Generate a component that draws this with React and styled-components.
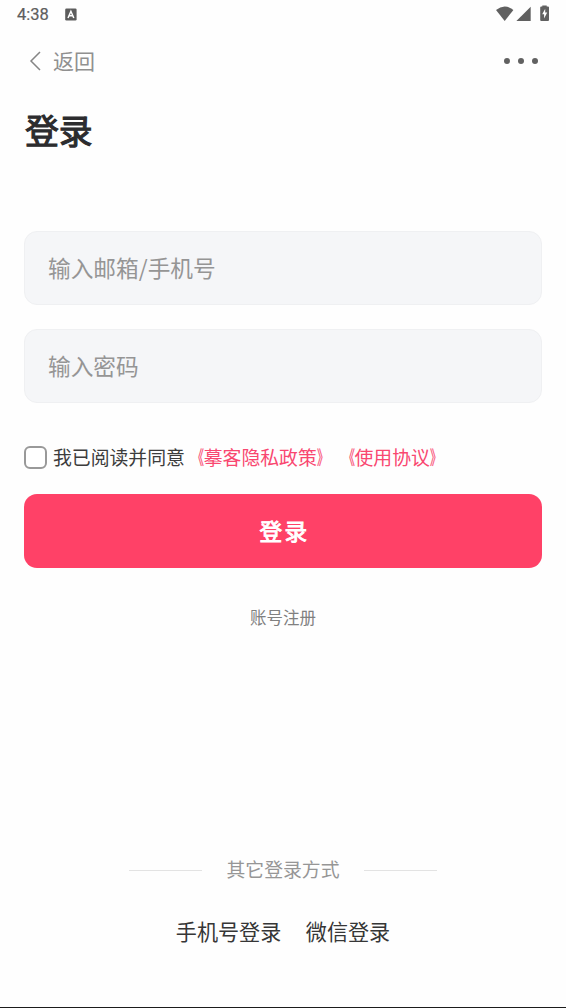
import React from 'react';
import styled, { createGlobalStyle } from 'styled-components';

const GlobalStyle = createGlobalStyle`
  * { box-sizing: border-box; }
  body { margin: 0; background: #fff; }
  button, input { font: inherit; }
`;

const Screen = styled.div`
  width: 100%;
  height: 1008px;
  display: flex;
  flex-direction: column;
  background: #fefefe;
  border-bottom: 1px solid #1c1c1c;
  font-family: 'Noto Sans CJK SC', sans-serif;
  text-spacing-trim: space-all;
  overflow: hidden;
`;

const StatusBar = styled.div`
  height: 28px;
  padding: 0 16px 0 17px;
  display: flex;
  align-items: center;
  justify-content: space-between;
  color: #5f5f5f;
`;

const StatusGroup = styled.div`
  display: flex;
  align-items: center;
  gap: ${(p) => p.$gap}px;
  svg { display: block; }
`;

const Clock = styled.span`
  font: 400 16.5px/20px Roboto, sans-serif;
  -webkit-text-stroke: 0.2px currentColor;
  padding-top: 2px;
`;

const NavBar = styled.header`
  height: 66px;
  padding: 0 28px;
  display: flex;
  align-items: center;
  justify-content: space-between;
`;

const BackButton = styled.button`
  display: flex;
  align-items: center;
  gap: 11px;
  padding: 0;
  border: 0;
  background: none;
  color: #909090;
  font-size: 21px;
  line-height: 30px;
`;

const BackLabel = styled.span`
  padding-bottom: 2px;
`;

const Dots = styled.div`
  display: flex;
  gap: 7.5px;
`;

const Dot = styled.span`
  width: 6.4px;
  height: 6.4px;
  border-radius: 50%;
  background: #616161;
`;

const Content = styled.main`
  flex: 1;
  display: flex;
  flex-direction: column;
  padding: 0 24px;
`;

const Title = styled.h1`
  margin: 12px 0 77px 1px;
  font-size: 33.8px;
  font-weight: 400;
  -webkit-text-stroke: 1.1px currentColor;
  line-height: 48px;
  color: #2c2c2e;
`;

const Field = styled.input`
  width: 100%;
  height: 74px;
  margin-bottom: 24px;
  padding: 0 23px 2px;
  border: 1px solid #eff0f2;
  border-radius: 13px;
  background: #f5f6f8;
  font-size: 22.7px;
  outline: none;
  &::placeholder { color: #959595; opacity: 1; }
`;

const Agreement = styled.label`
  height: 28px;
  margin: 16px 0 23px;
  display: flex;
  align-items: center;
  font-size: 18.85px;
  line-height: 28px;
  color: #3c3c3c;
  white-space: nowrap;
`;

const Checkbox = styled.input`
  appearance: none;
  width: 23px;
  height: 23px;
  margin: 0 6px 0 0;
  border: 2px solid #999;
  border-radius: 6px;
  background: #fff;
`;

const Policy = styled.span`
  color: #f94770;
`;

const Bracket = styled.span`
  display: inline-block;
  transform: scaleX(0.62);
  transform-origin: ${(p) => p.$side} center;
  -webkit-text-stroke: 0.25px currentColor;
`;

const SubmitButton = styled.button`
  height: 74px;
  padding: 0 0 2px 3px;
  border: 0;
  border-radius: 13px;
  background: #ff4167;
  color: #fff;
  font-size: 22.6px;
  font-weight: 400;
  -webkit-text-stroke: 0.9px currentColor;
  letter-spacing: 2.3px;
`;

const Register = styled.a`
  margin-top: 36px;
  align-self: center;
  font-size: 16.5px;
  line-height: 26px;
  color: #808080;
`;

const Alternatives = styled.footer`
  margin-top: auto;
  padding-bottom: 60px;
  display: flex;
  flex-direction: column;
  align-items: center;
`;

const Divider = styled.div`
  display: flex;
  align-items: center;
  gap: 24px;
  margin-bottom: 32px;
  font-size: 18.85px;
  line-height: 28px;
  color: #969696;
  &::before, &::after {
    content: '';
    width: 73px;
    height: 1px;
    margin-top: 2px;
    background: #e3e3e3;
  }
`;

const Methods = styled.nav`
  display: flex;
  gap: 24.5px;
  font-size: 21.1px;
  line-height: 32px;
  color: #363636;
`;

function PolicyLink({ children }) {
  return (
    <Policy>
      <Bracket $side="right">《</Bracket>
      {children}
      <Bracket $side="left">》</Bracket>
    </Policy>
  );
}

export default function App() {
  return (
    <>
      <GlobalStyle />
      <Screen>
        <StatusBar>
          <StatusGroup $gap={16}>
            <Clock>4:38</Clock>
            <svg width="12" height="13" viewBox="0 0 12 13">
              <rect x="0.2" y="0.5" width="11.4" height="12" rx="1.3" fill="#5c5c5c" />
              <path d="M3 10 L5.9 3.3 L8.8 10 M4 7.8H7.8" fill="none" stroke="#fff" strokeWidth="1.5" />
            </svg>
          </StatusGroup>
          <StatusGroup $gap={0}>
            <svg width="54" height="18" viewBox="496 5 54 18" fill="#606060">
              <path d="M496 10.1 Q504.5 2.8 513.4 10.1 L504.7 21Z" />
              <path d="M530.7 6.8V21H516.4Z" />
              <path d="M542.3 6.6V5.4H546.7V6.6H548Q549 6.6 549 7.6V20Q549 21 548 21H541.2Q540.2 21 540.2 20V7.6Q540.2 6.6 541.2 6.6Z" />
              <path d="M545.2 8.7L542.2 14.3H544.1V18.6L547.2 12.6H545.2Z" fill="#fff" />
            </svg>
          </StatusGroup>
        </StatusBar>
        <NavBar>
          <BackButton>
            <svg width="14" height="20" viewBox="0 0 14 20" fill="none" stroke="#858585" strokeWidth="1.5">
              <path d="M12 1 L3 10 L12 19" />
            </svg>
            <BackLabel>返回</BackLabel>
          </BackButton>
          <Dots><Dot /><Dot /><Dot /></Dots>
        </NavBar>
        <Content>
          <Title>登录</Title>
          <Field placeholder="输入邮箱/手机号" />
          <Field type="password" placeholder="输入密码" />
          <Agreement>
            <Checkbox type="checkbox" />
            我已阅读并同意
            <PolicyLink>摹客隐私政策</PolicyLink>
            <PolicyLink>使用协议</PolicyLink>
          </Agreement>
          <SubmitButton>登录</SubmitButton>
          <Register>账号注册</Register>
          <Alternatives>
            <Divider>其它登录方式</Divider>
            <Methods>
              <span>手机号登录</span>
              <span>微信登录</span>
            </Methods>
          </Alternatives>
        </Content>
      </Screen>
    </>
  );
}
